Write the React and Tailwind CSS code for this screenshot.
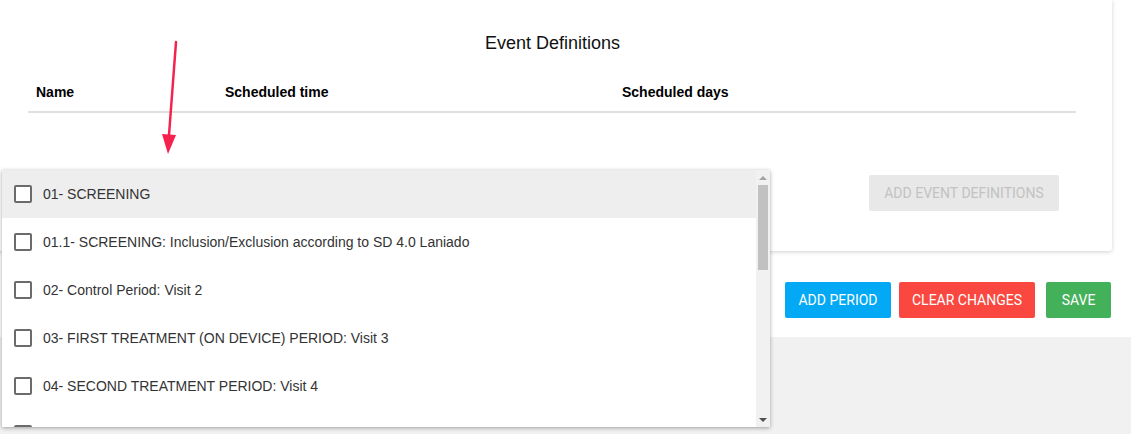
const items = [
  "01- SCREENING",
  "01.1- SCREENING: Inclusion/Exclusion according to SD 4.0 Laniado",
  "02- Control Period: Visit 2",
  "03- FIRST TREATMENT (ON DEVICE) PERIOD: Visit 3",
  "04- SECOND TREATMENT PERIOD: Visit 4",
  "",
];

function Checkbox() {
  return (
    <span className="w-[18px] h-[18px] shrink-0 rounded-[2px] border-2 border-[#6b6b6b] bg-white" />
  );
}

function EventDropdown() {
  return (
    <div className="absolute left-[2px] top-[170px] w-[768px] h-[257px] flex bg-white shadow-[0_1px_4px_rgba(0,0,0,0.35)] overflow-hidden">
      <ul className="flex-1 overflow-hidden">
        {items.map((label, i) => (
          <li
            key={i}
            className={`h-[48px] flex items-center gap-[11px] pl-[12px] text-[14px] text-[#333] ${
              i === 0 ? "bg-[#eeeeee]" : "bg-white"
            }`}
          >
            <Checkbox />
            {label && <span>{label}</span>}
          </li>
        ))}
      </ul>
      {/* scrollbar */}
      <div className="w-[14px] bg-[#f1f1f1] flex flex-col items-center">
        <div className="h-[15px] flex items-center justify-center">
          <span className="w-0 h-0 border-x-[4px] border-x-transparent border-b-[4px] border-b-[#a3a3a3]" />
        </div>
        <div className="w-[10px] h-[85px] bg-[#c1c1c1]" />
        <div className="flex-1" />
        <div className="h-[15px] flex items-center justify-center">
          <span className="w-0 h-0 border-x-[4px] border-x-transparent border-t-[4px] border-t-[#505050]" />
        </div>
      </div>
    </div>
  );
}

export default function App() {
  return (
    <div
      className="relative w-[1131px] h-[434px] overflow-hidden bg-white"
      style={{ fontFamily: '"Liberation Sans", Arial, sans-serif' }}
    >
      <div className="h-[337px] bg-white flex flex-col">
        {/* Event definitions card */}
        <div className="ml-[-10px] w-[1122px] h-[251px] bg-white rounded-b-[3px] shadow-[0_1px_4px_rgba(0,0,0,0.18)] flex flex-col">
          <h2 className="mt-[33px] ml-[3px] text-center text-[18px] text-[#111] leading-[20px]">
            Event Definitions
          </h2>
          <div className="ml-[38px] mr-[36px] mt-[29px] flex border-b-2 border-[#e0e0e0] pb-[8px] text-[14px] font-bold text-black">
            <span className="pl-[8px] w-[197px]">Name</span>
            <span className="w-[397px]">Scheduled time</span>
            <span>Scheduled days</span>
          </div>
          <div className="flex justify-end mr-[53px] mt-[62px]">
            <button
              disabled
              className="h-[36px] w-[190px] rounded-[2px] bg-[#e8e8e8] text-[#c2c2c2] text-[14px]"
              style={{ fontFamily: "Roboto, sans-serif" }}
            >
              ADD EVENT DEFINITIONS
            </button>
          </div>
        </div>

        {/* action buttons */}
        <div
          className="flex justify-end gap-[8px] pr-[20px] mt-[31px] text-[14px] text-white"
          style={{ fontFamily: "Roboto, sans-serif" }}
        >
          <button className="h-[36px] w-[106px] rounded-[2px] bg-[#03a9f4]">ADD PERIOD</button>
          <button className="h-[36px] w-[136px] rounded-[2px] bg-[#fa4840]">CLEAR CHANGES</button>
          <button className="ml-[3px] h-[36px] w-[65px] rounded-[2px] bg-[#43b05a]">SAVE</button>
        </div>
      </div>
      <div className="h-[97px] bg-[#f1f1f1]" />

      <EventDropdown />

      {/* annotation arrow */}
      <svg className="absolute left-[150px] top-[35px]" width="40" height="125" viewBox="0 0 40 125">
        <line x1="26" y1="7" x2="19" y2="100" stroke="#f5224e" strokeWidth="2.5" strokeLinecap="round" />
        <polygon points="12,99 26,100 18,119" fill="#f5224e" />
      </svg>
    </div>
  );
}
